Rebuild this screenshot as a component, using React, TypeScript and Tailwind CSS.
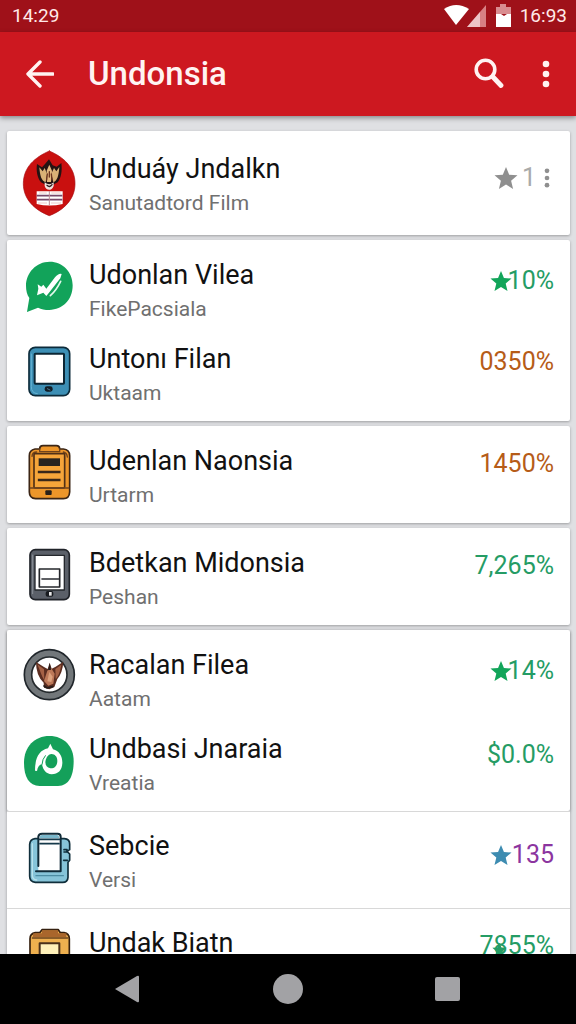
import type { ReactNode } from "react";

function Drawing({ box, children }: { box: string; children: ReactNode }) {
  return (
    <svg viewBox={box} className="h-[68px] w-[52px] shrink-0 overflow-visible" fill="none" strokeLinecap="round" strokeLinejoin="round" aria-hidden="true">
      {children}
    </svg>
  );
}

const Shield = () => (
  <Drawing box="69 57 156 204">
    <path d="M148 57C190 75 225 105 225 155C225 203 190 235 148 251C106 235 70 203 70 155C70 105 106 75 148 57Z" fill="#c9100f" stroke="#a60c12" strokeWidth="2" />
    <path d="M111 96L126 106L135 96L147 82L158 100L170 104L184 93C187 116 184 137 173 151L148 164L123 151C112 137 108 116 111 96Z" fill="#241312" />
    <path d="M118 106C120 132 124 146 137 151L141 125L134 108L128 118ZM178 105C176 132 172 146 160 151L154 125L162 108L169 118Z" fill="#d9b176" />
    <path d="M148 98L156 116L153 150H141L140 116Z" fill="#e2b77e" />
    <path d="M148 119V135M142 126L140 144M154 126L156 144" stroke="#6c3520" strokeWidth="4" />
    <path d="M134 151Q148 163 161 151V162Q155 175 148 173Q137 173 134 162Z" fill="#f0e4df" />
    <path d="M141 160Q149 168 156 158" stroke="#302124" strokeWidth="4" />
    <path d="M110 178H188V216Q148 225 110 216Z" fill="#fff" />
    <path d="M110 191H187M110 203H187" stroke="#77496b" strokeWidth="5" strokeLinecap="butt" />
    <path d="M118 183H139M155 183H181M115 213H140M154 213H182" stroke="#e4ada9" strokeWidth="2" />
    <path d="M148 178V219" stroke="#bf8c97" strokeWidth="3" />
  </Drawing>
);

const ChatMark = () => (
  <Drawing box="69 51 156 204">
    <path d="M149 65C188 65 218 96 218 136C218 180 188 209 148 210C134 210 124 207 114 203L81 216L88 174C81 164 78 151 78 137C78 98 109 65 149 65Z" fill="#12a35a" />
    <path d="M111 166L115 146L113 133L124 140L130 134L139 146L165 112Q176 99 185 102L181 115L147 158L139 168L130 158Z" fill="#fff" />
    <path d="M151 167Q169 151 182 124" stroke="#e2f8eb" strokeWidth="5" />
  </Drawing>
);

const BlueTablet = () => (
  <Drawing box="69 303 156 204">
    <rect x="87" y="322" width="122" height="145" rx="19" fill="#3d8fb5" stroke="#0c2b3a" strokeWidth="5" />
    <path d="M94 342V440Q94 460 112 461" stroke="#65b3d2" strokeWidth="3" />
    <rect x="104" y="341" width="88" height="90" rx="2" fill="#fff" stroke="#0c2634" strokeWidth="6" />
    <rect x="134" y="439" width="24" height="16" rx="7" fill="#111d26" />
    <path d="M142 446L150 450" stroke="#4b7890" strokeWidth="3" />
  </Drawing>
);

const OrangeClipboard = () => (
  <Drawing box="69 54 156 204">
    <path d="M105 72H119Q119 62 129 62H169Q179 62 179 72H190Q209 74 209 92V201Q208 221 190 221H107Q88 220 88 201V92Q88 75 105 72Z" fill="#ed962a" stroke="#3b2515" strokeWidth="5" />
    <path d="M119 72V80H179V72M96 94Q97 81 110 81M190 81Q201 83 202 96" stroke="#70431d" strokeWidth="4" />
    <rect x="102" y="86" width="92" height="103" rx="3" fill="#f6a53a" stroke="#513016" strokeWidth="5" />
    <rect x="116" y="100" width="64" height="23" fill="#28231f" />
    <path d="M117 141H178M117 165H178" stroke="#38271a" strokeWidth="7" strokeLinecap="square" />
    <path d="M91 189H206" stroke="#70431d" strokeWidth="4" />
    <rect x="136" y="196" width="19" height="14" rx="3" fill="#28201a" />
  </Drawing>
);

const GreyTablet = () => (
  <Drawing box="69 360 156 204">
    <rect x="90" y="374" width="118" height="150" rx="16" fill="#5b6069" stroke="#202329" strokeWidth="5" />
    <path d="M98 390V506" stroke="#8b9098" strokeWidth="3" />
    <rect x="105" y="391" width="88" height="104" fill="#fff" stroke="#25282d" strokeWidth="4" />
    <rect x="118" y="432" width="61" height="54" fill="#fff" stroke="#25272b" strokeWidth="5" />
    <path d="M126 462H176" stroke="#292b30" strokeWidth="5" />
    <rect x="137" y="498" width="23" height="17" rx="6" fill="#181b20" />
    <path d="M147 501H155V512H147Z" fill="#e9e9ea" />
  </Drawing>
);

const EagleBadge = () => (
  <Drawing box="69 51 156 204">
    <circle cx="148" cy="134" r="75" fill="#72777a" stroke="#20262b" strokeWidth="5" />
    <circle cx="148" cy="134" r="53" fill="#fff" stroke="#252a2d" strokeWidth="5" />
    <path d="M108 96L132 111L143 117L149 98L155 116L167 110L190 95Q188 128 172 147L163 171L148 178L132 173L131 158Q108 137 108 96Z" fill="#5b2d20" />
    <path d="M112 103L127 140L133 151L132 118ZM184 104L166 117L167 147Q179 135 184 104Z" fill="#a56145" />
    <path d="M142 122L154 115L164 131L160 161L145 167L132 153Z" fill="#bd7858" />
    <path d="M148 126L158 140L154 156L142 154Z" fill="#dda17d" />
    <path d="M149 99L153 120H145Z" fill="#251d1b" />
    <path d="M132 168L142 174L158 170" stroke="#251d1b" strokeWidth="5" />
  </Drawing>
);

const GreenMark = () => (
  <Drawing box="69 303 156 204">
    <path d="M148 318C193 318 221 350 221 393C221 436 208 467 174 468H119C87 467 72 441 72 398C72 350 104 318 148 318Z" fill="#14a05a" />
    <path d="M105 422C105 384 117 361 144 355L151 341L159 358C178 363 188 379 187 400C186 421 174 433 155 433C138 432 129 420 126 403C118 404 113 411 111 423Z" fill="#fff" />
    <path d="M147 374C160 368 172 378 172 392C172 408 163 416 151 415C139 413 134 402 137 390Q140 379 147 374Z" fill="#14a05a" />
    <path d="M126 403Q127 387 136 377" stroke="#14a05a" strokeWidth="3" />
  </Drawing>
);

const BlueClipboard = () => (
  <Drawing box="69 54 156 204">
    <path d="M105 86H193Q209 87 209 102V119L201 124L209 132V151L204 157V202Q203 217 188 217H106Q89 216 89 199V103Q90 88 105 86Z" fill="#86c4d9" stroke="#102e3b" strokeWidth="5" />
    <path d="M97 101V197Q98 209 110 210" stroke="#b9e2ec" strokeWidth="4" />
    <path d="M115 80Q116 71 126 71H173Q182 71 182 80V184H115Z" fill="#fff" />
    <path d="M120 79Q121 75 127 75H171Q177 75 177 80V85H119Z" fill="#79b7cb" />
    <path d="M115 168V80Q116 71 126 71H173Q182 71 182 80V184H108" stroke="#102b38" strokeWidth="6" />
    <path d="M118 88H179M120 101H177" stroke="#15394a" strokeWidth="5" />
    <path d="M192 119H201V126H192M191 151H202" stroke="#102e3b" strokeWidth="5" />
    <path d="M108 197H190" stroke="#4c8da4" strokeWidth="4" />
  </Drawing>
);

const TanClipboard = () => (
  <Drawing box="69 345 156 204">
    <path d="M106 368H119L126 359H175L181 368H192Q208 371 208 386V510H90V386Q90 371 106 368Z" fill="#eeb04f" stroke="#35200f" strokeWidth="5" />
    <path d="M100 370H199V381H98ZM126 361H174V375H126Z" fill="#a9662c" />
    <path d="M97 384H203" stroke="#68401e" strokeWidth="4" />
    <path d="M119 438V400H178V438" fill="#fff1ba" stroke="#49301b" strokeWidth="6" />
  </Drawing>
);

function Star({ className }: { className: string }) {
  return (
    <svg viewBox="0 0 24 24" className={className} fill="currentColor" aria-hidden="true">
      <path d="M12 1L15.2 8.7L23.5 9.3L17.1 14.7L19.1 23L12 18.5L4.9 23L6.9 14.7L.5 9.3L8.8 8.7Z" />
    </svg>
  );
}

function Dots({ className }: { className: string }) {
  return (
    <svg viewBox="0 0 8 28" className={className} fill="currentColor" aria-hidden="true">
      <circle cx="4" cy="4" r="3.3" />
      <circle cx="4" cy="14" r="3.3" />
      <circle cx="4" cy="24" r="3.3" />
    </svg>
  );
}

type RowProps = {
  icon: ReactNode;
  title: string;
  subtitle?: string;
  valueHeight?: string;
  children: ReactNode;
};

function Row({ icon, title, subtitle, valueHeight = "h-[42px]", children }: RowProps) {
  return (
    <li className="flex gap-[14px] px-4">
      {icon}
      <div className="min-w-0 flex-1">
        <h2 className="text-[27px] leading-9 whitespace-nowrap text-[#111]">{title}</h2>
        {subtitle && <p className="text-[21px] leading-8 whitespace-nowrap text-[#707070]">{subtitle}</p>}
      </div>
      <div className={`flex shrink-0 items-center text-[25px] ${valueHeight}`}>{children}</div>
    </li>
  );
}

function Card({ children }: { children: ReactNode }) {
  return <ul className="flex flex-col gap-4 rounded-xs bg-white pt-[17px] pb-3 shadow-[0_1px_3px_rgba(0,0,0,0.3)]">{children}</ul>;
}

export default function App() {
  return (
    <div className="flex h-screen flex-col overflow-hidden bg-[#dfe0e3] font-['Roboto','Liberation_Sans',sans-serif]">
      <div className="flex h-8 shrink-0 items-center justify-between bg-[#9f1119] pr-[9px] pl-3 text-[19px] text-[#ffe9e9]">
        <span>14:29</span>
        <div className="flex items-center">
          <svg viewBox="0 0 68 24" className="mr-2 h-6 w-[68px]" aria-hidden="true">
            <path d="M0 5Q12-3 25 5L12 21Z" fill="#fff" />
            <path d="M23 23L42 1V23Z" fill="#d87f83" />
            <path d="M23 23L36 8V23Z" fill="#fff" opacity=".55" />
            <path d="M52 3H56V0H62V3H67V10H52Z" fill="#d98d90" />
            <path d="M52 10H57L60 12L63 10H67V23H52Z" fill="#fff" />
          </svg>
          <span>16:93</span>
        </div>
      </div>

      <header className="z-10 flex h-[84px] shrink-0 items-center bg-[#cd1820] px-[26px] text-[#fff3f2] shadow-[0_2px_5px_rgba(0,0,0,0.4)]">
        <button type="button" aria-label="Back">
          <svg viewBox="0 0 28 28" className="h-7 w-7" fill="none" stroke="currentColor" strokeWidth="3.4" strokeLinecap="round" strokeLinejoin="round">
            <path d="M14 2L2 14L14 26M2 14H27" />
          </svg>
        </button>
        <h1 className="ml-[34px] flex-1 text-[33px] leading-10 font-medium">Undonsia</h1>
        <button type="button" aria-label="Search">
          <svg viewBox="0 0 30 32" className="h-8 w-[30px]" fill="none" stroke="currentColor" strokeLinecap="round">
            <circle cx="11.5" cy="11.5" r="9.3" strokeWidth="3.6" />
            <path d="M19 19L27 27.5" strokeWidth="4.8" />
          </svg>
        </button>
        <button type="button" aria-label="More options" className="ml-[38px]">
          <Dots className="h-7 w-2" />
        </button>
      </header>

      <main className="flex min-h-0 flex-1 flex-col gap-[5px] overflow-hidden pt-[15px] pr-[6px] pl-[7px]">
        <ul className="rounded-xs bg-white pt-5 pb-4 shadow-[0_1px_3px_rgba(0,0,0,0.3)]">
          <Row icon={<Shield />} title="Unduáy Jndalkn" subtitle="Sanutadtord Film" valueHeight="h-[54px]">
            <Star className="h-6 w-6 text-[#8f8f8f]" />
            <span className="ml-1 text-[#aaa]">1</span>
            <button type="button" aria-label="More options for Unduáy Jndalkn" className="ml-2 pr-1 text-[#8f8f8f]">
              <Dots className="h-5 w-[6px]" />
            </button>
          </Row>
        </ul>

        <Card>
          <Row icon={<ChatMark />} title="Udonlan Vilea" subtitle="FikePacsiala" valueHeight="h-12">
            <Star className="-mr-1 h-[22px] w-[22px] text-[#13a55a]" />
            <span className="text-[#259c65]">10%</span>
          </Row>
          <Row icon={<BlueTablet />} title="Untonı Filan" subtitle="Uktaam">
            <span className="text-[#b65c18]">0350%</span>
          </Row>
        </Card>

        <Card>
          <Row icon={<OrangeClipboard />} title="Udenlan Naonsia" subtitle="Urtarm">
            <span className="text-[#b65c18]">1450%</span>
          </Row>
        </Card>

        <Card>
          <Row icon={<GreyTablet />} title="Bdetkan Midonsia" subtitle="Peshan">
            <span className="text-[#259c65]">7,265%</span>
          </Row>
        </Card>

        <div className="shadow-[0_1px_3px_rgba(0,0,0,0.3)]">
          <Card>
            <Row icon={<EagleBadge />} title="Racalan Filea" subtitle="Aatam" valueHeight="h-12">
              <Star className="-mr-1 h-[22px] w-[22px] text-[#13a55a]" />
              <span className="text-[#259c65]">14%</span>
            </Row>
            <Row icon={<GreenMark />} title="Undbasi Jnaraia" subtitle="Vreatia" valueHeight="h-12">
              <span className="text-[#259c65]">$0.0%</span>
            </Row>
          </Card>
          <ul className="border-t border-[#d8d8d8] bg-white pt-4 pb-3">
            <Row icon={<BlueClipboard />} title="Sebcie" subtitle="Versi" valueHeight="h-[54px]">
              <Star className="h-[22px] w-[22px] text-[#3d8cb1]" />
              <span className="text-[#8c359f]">135</span>
            </Row>
          </ul>
          <ul className="border-t border-[#d8d8d8] bg-white pt-4 pb-3">
            <Row icon={<TanClipboard />} title="Undak Biatn">
              <span className="relative text-[#259c65]">
                7855%
                <Star className="absolute top-[15px] left-[13px] h-[15px] w-[15px]" />
              </span>
            </Row>
          </ul>
        </div>
      </main>

      <nav aria-label="System" className="z-10 flex h-[70px] shrink-0 items-center justify-between bg-black pr-[116px] pl-[114px] text-[#a2a2a5]">
        <button type="button" aria-label="Back">
          <svg viewBox="0 0 26 28" className="h-7 w-[26px]" fill="currentColor"><path d="M1 14L23 1Q25 0 25 2V26Q25 28 23 27Z" /></svg>
        </button>
        <button type="button" aria-label="Home" className="h-[30px] w-[30px] rounded-full bg-current" />
        <button type="button" aria-label="Recent apps" className="h-6 w-[25px] rounded-xs bg-current" />
      </nav>
    </div>
  );
}
